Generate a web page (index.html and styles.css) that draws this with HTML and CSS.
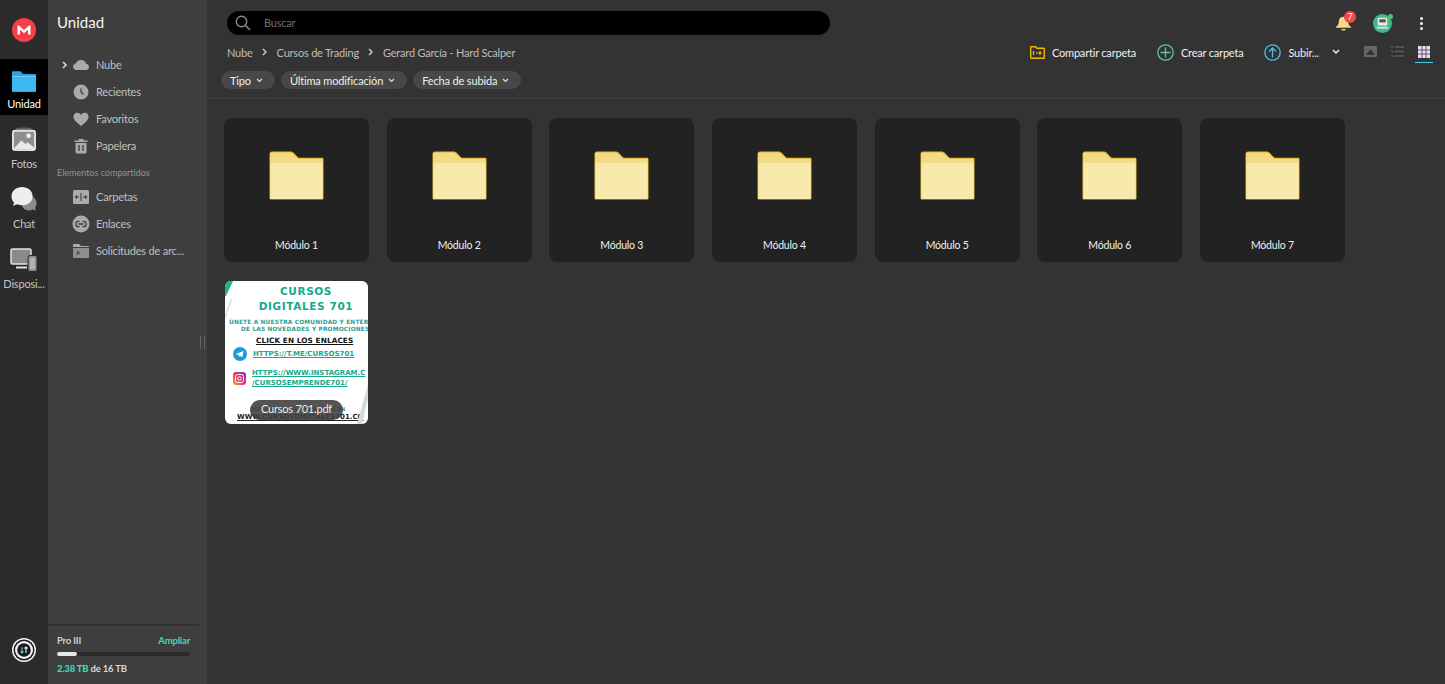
FILE: index.html
```html
<!DOCTYPE html>
<html lang="es">
<head>
    <meta charset="UTF-8">
    <meta name="viewport" content="width=device-width, initial-scale=1.0">
    <title>MEGA</title>
    <link rel="stylesheet" href="styles.css">
</head>
<body>
    <svg class="defs" width="0" height="0">
        <symbol id="folder" viewBox="0 0 54 48">
            <path d="M3 .5h18c1.500 0 2.500.5 3.500 1.500l3 3c1 1 1.500 1.500 3 1.500H52c1 0 1.500.5 1.500 1.500v38c0 1-.5 1.500-1.500 1.500H2c-1 0-1.500-.5-1.500-1.500V3C.5 1.500 1.500.5 3 .5z" fill="#e2b92c"/>
            <path d="M3 1.500h18c1 0 2 .5 3 1.500l3 3c1 1 2 1.500 3.500 1.500H52c.5 0 .8.300.8.800V11H1.200V3c0-1 .8-1.500 1.800-1.500z" fill="#f3da85"/>
            <path d="M1.200 11h51.600v35.200c0 .5-.3.800-.8.800H2c-.5 0-.8-.3-.8-.8z" fill="#f8e9ad"/>
        </symbol>
    </svg>

    <div class="app">
        <!-- Barra de iconos -->
        <nav class="rail">
            <div class="rail-logo">
                <svg width="24" height="24" viewBox="0 0 24 24">
                    <circle cx="12" cy="12" r="12" fill="#f4404a"/>
                    <path d="M5.500 16.500V7.500h1.500L12 12l5-4.500h1.500v9h-2.500v-4.800L12 15.200l-4-3.500v4.800z" fill="#fff"/>
                </svg>
            </div>
            <a class="rail-item active">
                <svg width="24" height="21" viewBox="0 0 26 22">
                    <path d="M1 0h8l3 3h13c.6 0 1 .4 1 1v17c0 .6-.4 1-1 1H1c-.6 0-1-.4-1-1V1c0-.6.4-1 1-1z" fill="#2aa5e8"/>
                    <path d="M0 5.500h26V21c0 .6-.4 1-1 1H1c-.6 0-1-.4-1-1z" fill="#3cb7f2"/>
                    <path d="M0 5h26v.7H0z" fill="#9ddcf8"/>
                </svg>
                <span>Unidad</span>
            </a>
            <a class="rail-item">
                <svg width="24" height="25" viewBox="0 0 26 26">
                    <path d="M4 2.500C4.500 1 6 0 8 0h10c2 0 3.500 1 4 2.500z" fill="#5f5f5f"/>
                    <rect x="1" y="3.500" width="24" height="21" rx="2.500" fill="#8f8f8f" stroke="#e4e4e4" stroke-width="2"/>
                    <circle cx="18" cy="9" r="2.500" fill="#f2f2f2"/>
                    <path d="M2 23l8-9 4.500 4 2.500-2 7 6v1.500H2z" fill="#e9e9e9"/>
                </svg>
                <span>Fotos</span>
            </a>
            <a class="rail-item">
                <svg width="26" height="25" viewBox="0 0 26 26">
                    <path d="M14 10c5-2 12 0 12 7 0 2-.5 3.500-1.500 4.500l1 3-3.500-1c-4 2-10 .5-11-4z" fill="#8c8c8c"/>
                    <path d="M11 0c6 0 11 4 11 9.500S17 19 11 19c-1.800 0-3.400-.3-4.800-1l-4.700 1.500 1.200-3.700C1 15 0 12.500 0 9.500 0 4 5 0 11 0z" fill="#eeeeee"/>
                </svg>
                <span>Chat</span>
            </a>
            <a class="rail-item">
                <svg width="28" height="24" viewBox="0 0 28 24">
                    <rect x="1" y="1" width="20" height="15" rx="1.500" fill="#8a8a8a" stroke="#e2e2e2" stroke-width="1.500"/>
                    <path d="M6 19.500h11" stroke="#e2e2e2" stroke-width="2"/>
                    <rect x="18" y="7.500" width="9" height="16" rx="2" fill="#8f8f8f" stroke="#2c2c2c" stroke-width="1"/>
                    <rect x="20" y="10" width="5" height="11" fill="#b3b3b3"/>
                </svg>
                <span>Disposi...</span>
            </a>
            <div class="rail-bottom">
                <svg width="24" height="24" viewBox="0 0 24 24">
                    <circle cx="12" cy="12" r="12" fill="#f5f5f5"/>
                    <circle cx="12" cy="12" r="10.500" fill="#1c1c1c"/>
                    <circle cx="12" cy="12" r="9" fill="#f5f5f5"/>
                    <circle cx="12" cy="12" r="6.800" fill="#1c1c1c"/>
                    <path d="M10 9v6M8.600 13.500l1.400 1.500 1.400-1.500" stroke="#5ec8f0" stroke-width="1.100" fill="none"/>
                    <path d="M14 15V9M12.600 10.500L14 9l1.400 1.500" stroke="#f2f2f2" stroke-width="1.100" fill="none"/>
                </svg>
            </div>
        </nav>

        <!-- Panel lateral -->
        <aside class="sidebar">
            <h1 class="sidebar-title">Unidad</h1>
            <ul class="tree">
                <li class="tree-row">
                    <svg class="tree-arrow" width="6" height="8" viewBox="0 0 6 8"><path d="M1 1l3 3-3 3" fill="none" stroke="#d8d8d8" stroke-width="1.600"/></svg>
                    <svg class="tree-icon" width="16" height="16" viewBox="0 0 16 16"><path d="M3.800 13C1.700 13 0 11.600 0 9.700c0-1.700 1.300-3 3-3.200C3.600 4.400 5.600 3 8 3c2.600 0 4.600 1.600 5 3.800 1.800.2 3 1.500 3 3.100 0 1.800-1.400 3.100-3.300 3.100z" fill="#aaa"/></svg>
                    <span>Nube</span>
                </li>
                <li class="tree-row">
                    <svg class="tree-icon" width="16" height="16" viewBox="0 0 16 16"><circle cx="8" cy="8" r="7.500" fill="#aaa"/><path d="M8 4.500V8l2.500 2.500" fill="none" stroke="#3e3e3e" stroke-width="1.300"/></svg>
                    <span>Recientes</span>
                </li>
                <li class="tree-row">
                    <svg class="tree-icon" width="16" height="16" viewBox="0 0 16 16"><path d="M8 15C3.500 11.500 1 9 .5 6.500.2 3.800 2 1.800 4.300 1.800 5.800 1.800 7.200 2.600 8 4c.8-1.400 2.200-2.200 3.700-2.200 2.300 0 4.100 2 3.800 4.700C15 9 12.500 11.500 8 15z" fill="#aaa"/></svg>
                    <span>Favoritos</span>
                </li>
                <li class="tree-row">
                    <svg class="tree-icon" width="14" height="16" viewBox="1 0 14 16"><path d="M1.500 2.500h4V1h5v1.500h4V4h-13zM2.500 5h11v9c0 .8-.6 1.500-1.500 1.500H4c-.9 0-1.500-.7-1.500-1.500z" fill="#aaa"/><path d="M6 7v6M10 7v6" stroke="#3e3e3e" stroke-width="1.300"/></svg>
                    <span>Papelera</span>
                </li>
            </ul>
            <p class="tree-header">Elementos compartidos</p>
            <ul class="tree">
                <li class="tree-row">
                    <svg class="tree-icon" width="16" height="14" viewBox="0 0 16 14"><rect width="16" height="14" rx="1.500" fill="#aaa"/><path d="M8 3v8M2.500 7h3.500M4 5.500L2.500 7 4 8.500M13.500 7H10M12 5.500L13.500 7 12 8.500" fill="none" stroke="#3e3e3e" stroke-width="1.100"/></svg>
                    <span>Carpetas</span>
                </li>
                <li class="tree-row">
                    <svg class="tree-icon" width="18" height="18" viewBox="0 0 18 18"><circle cx="9" cy="9" r="8.500" fill="#aaa"/><path d="M7.500 6.300H6.500a2.700 2.700 0 000 5.400h1M10.500 6.300h1a2.700 2.700 0 010 5.400h-1M6.500 9h5" fill="none" stroke="#3e3e3e" stroke-width="1.300"/></svg>
                    <span>Enlaces</span>
                </li>
                <li class="tree-row">
                    <svg class="tree-icon" width="16" height="14" viewBox="0 0 16 14"><path d="M0 1c0-.6.4-1 1-1h5l2 2h7c.6 0 1 .4 1 1H0z" fill="#aaa"/><path d="M0 4h16v9c0 .6-.4 1-1 1H1c-.6 0-1-.4-1-1z" fill="#8e8e8e"/><path d="M3 11l3-3M3.500 8H6v2.500" fill="none" stroke="#3e3e3e" stroke-width="1"/></svg>
                    <span>Solicitudes de arc...</span>
                </li>
            </ul>
            <div class="resize-handle"></div>
            <div class="storage">
                <div class="storage-top">
                    <span class="plan">Pro III</span>
                    <a class="upgrade">Ampliar</a>
                </div>
                <div class="storage-bar"><div class="storage-fill" style="width:14.900%"></div></div>
                <div class="storage-text"><b>2.38 TB</b> de 16 TB</div>
            </div>
        </aside>

        <!-- Contenido -->
        <main class="main">
            <header class="topbar">
                <div class="search">
                    <svg width="16" height="16" viewBox="0 0 16 16"><circle cx="6.500" cy="6.500" r="5.200" fill="none" stroke="#8a8a8a" stroke-width="1.400"/><path d="M10.500 10.500l4.500 4.500" stroke="#8a8a8a" stroke-width="1.600"/></svg>
                    <span>Buscar</span>
                </div>
                <div class="top-icons">
                    <div class="bell">
                        <svg width="15" height="15" viewBox="0 0 16 18" preserveAspectRatio="none"><path d="M8 1c3 0 5 2.300 5 5.500 0 3.500 1 5 3 6.500v1H0v-1c2-1.500 3-3 3-6.500C3 3.300 5 1 8 1z" fill="#f6d98a"/><path d="M5.500 15.500h5c0 1.200-1.100 2-2.500 2s-2.500-.8-2.500-2z" fill="#f3cf73"/></svg>
                        <span class="badge">7</span>
                    </div>
                    <div class="avatar">
                        <svg width="19" height="19" viewBox="0 0 18 18"><circle cx="9" cy="9" r="9" fill="#3fb98c"/><rect x="4.500" y="3.500" width="9" height="7.500" rx="1" fill="#e9e9e9"/><rect x="6" y="5" width="6" height="3" fill="#555"/><path d="M3.500 12h11v2h-11z" fill="#d6d6d6"/></svg>
                        <span class="online"></span>
                    </div>
                    <div class="kebab"><i></i><i></i><i></i></div>
                </div>
            </header>

            <div class="pathbar">
                <div class="breadcrumb">
                    <span>Nube</span>
                    <svg width="6" height="8" viewBox="0 0 6 8"><path d="M1 1l3 3-3 3" fill="none" stroke="#d0d0d0" stroke-width="1.400"/></svg>
                    <span>Cursos de Trading</span>
                    <svg width="6" height="8" viewBox="0 0 6 8"><path d="M1 1l3 3-3 3" fill="none" stroke="#d0d0d0" stroke-width="1.400"/></svg>
                    <span>Gerard García - Hard Scalper</span>
                </div>
                <div class="actions">
                    <a class="action share">
                        <svg width="15" height="13" viewBox="0 0 15 13"><path d="M1 .7h4.500l1.500 1.500h6.500c.5 0 .8.300.8.800v8.500c0 .5-.3.800-.8.800H1.500c-.5 0-.8-.3-.8-.8V1z" fill="none" stroke="#f5b800" stroke-width="1.400"/><path d="M3.500 5v4M6 7h5M9.500 5.500L11 7 9.500 8.500" fill="none" stroke="#f5b800" stroke-width="1.200"/></svg>
                        <span>Compartir carpeta</span>
                    </a>
                    <a class="action create">
                        <svg width="17" height="17" viewBox="0 0 17 17"><circle cx="8.500" cy="8.500" r="7.700" fill="none" stroke="#5fc4a4" stroke-width="1.300"/><path d="M8.500 3.500v10M3.500 8.500h10" stroke="#5fc4a4" stroke-width="1.300"/></svg>
                        <span>Crear carpeta</span>
                    </a>
                    <a class="action upload">
                        <svg width="17" height="17" viewBox="0 0 17 17"><circle cx="8.500" cy="8.500" r="7.700" fill="none" stroke="#4db8ef" stroke-width="1.300"/><path d="M8.500 13.500v-9M5 7.500l3.500-3.500L12 7.500" fill="none" stroke="#4db8ef" stroke-width="1.300"/></svg>
                        <span>Subir...</span>
                        <svg class="upload-caret" width="8" height="6" viewBox="0 0 8 6"><path d="M1 1l3 3 3-3" fill="none" stroke="#eee" stroke-width="1.500"/></svg>
                    </a>
                    <div class="views">
                        <a class="view">
                            <svg width="13" height="11" viewBox="0 0 13 11"><rect width="13" height="11" rx="1" fill="#666"/><path d="M2 9l4.500-6L11 9z" fill="#333"/></svg>
                        </a>
                        <a class="view">
                            <svg width="13" height="11" viewBox="0 0 13 11"><path d="M0 1h2.500M4 1h9M0 5.500h2.500M4 5.500h9M0 10h2.500M4 10h9" stroke="#5c5c5c" stroke-width="1.500"/></svg>
                        </a>
                        <a class="view selected">
                            <svg width="12" height="12" viewBox="0 0 12 12"><rect width="12" height="12" fill="#e6e0ea"/><path d="M4 0v12M8 0v12M0 4h12M0 8h12" stroke="#6a4a78" stroke-width="1"/></svg>
                        </a>
                    </div>
                </div>
            </div>

            <div class="filters">
                <button class="chip">Tipo <svg width="7" height="5" viewBox="0 0 7 5"><path d="M1 1l2.500 2.500L6 1" fill="none" stroke="#ddd" stroke-width="1.200"/></svg></button>
                <button class="chip">Última modificación <svg width="7" height="5" viewBox="0 0 7 5"><path d="M1 1l2.500 2.500L6 1" fill="none" stroke="#ddd" stroke-width="1.200"/></svg></button>
                <button class="chip">Fecha de subida <svg width="7" height="5" viewBox="0 0 7 5"><path d="M1 1l2.500 2.500L6 1" fill="none" stroke="#ddd" stroke-width="1.200"/></svg></button>
            </div>

            <section class="grid">
                <div class="card"><svg class="folder" width="55" height="49"><use href="#folder"/></svg><span>Módulo 1</span></div>
                <div class="card"><svg class="folder" width="55" height="49"><use href="#folder"/></svg><span>Módulo 2</span></div>
                <div class="card"><svg class="folder" width="55" height="49"><use href="#folder"/></svg><span>Módulo 3</span></div>
                <div class="card"><svg class="folder" width="55" height="49"><use href="#folder"/></svg><span>Módulo 4</span></div>
                <div class="card"><svg class="folder" width="55" height="49"><use href="#folder"/></svg><span>Módulo 5</span></div>
                <div class="card"><svg class="folder" width="55" height="49"><use href="#folder"/></svg><span>Módulo 6</span></div>
                <div class="card"><svg class="folder" width="55" height="49"><use href="#folder"/></svg><span>Módulo 7</span></div>

                <div class="card-pdf">
                    <svg class="pdf-deco" width="143" height="143" viewBox="0 0 143 143">
                        <path d="M0 0h8L1 15H0z" fill="#17b890"/>
                        <path d="M0 34L6 18l1 1-7 19z" fill="#d4dcda"/>
                        <path d="M143 103l-11 40h5l6-25z" fill="#d4dcda"/>
                    </svg>
                    <div class="pdf-title">CURSOS</div>
                    <div class="pdf-title">DIGITALES 701</div>
                    <div class="pdf-sub first">ÚNETE A NUESTRA COMUNIDAD Y ENTÉR</div>
                    <div class="pdf-sub second">DE LAS NOVEDADES Y PROMOCIONES</div>
                    <div class="pdf-click">CLICK EN LOS ENLACES</div>
                    <div class="pdf-link">
                        <svg width="14" height="14" viewBox="0 0 14 14"><circle cx="7" cy="7" r="7" fill="#1d9bd7"/><path d="M2.800 7L10.500 4 9.300 10.300 7 8.700 5.800 9.800 5.600 8z" fill="#fff"/></svg>
                        <span>HTTPS://T.ME/CURSOS701</span>
                    </div>
                    <div class="pdf-link insta">
                        <svg width="13" height="13" viewBox="0 0 13 13"><defs><linearGradient id="ig" x1="0" y1="1" x2="1" y2="0"><stop offset="0" stop-color="#f9a825"/><stop offset=".5" stop-color="#e1306c"/><stop offset="1" stop-color="#6a3fc8"/></linearGradient></defs><rect width="13" height="13" rx="3" fill="url(#ig)"/><rect x="2.500" y="2.500" width="8" height="8" rx="2" fill="none" stroke="#fff"/><circle cx="6.500" cy="6.500" r="1.800" fill="none" stroke="#fff"/></svg>
                        <span>HTTPS://WWW.INSTAGRAM.C<br>/CURSOSEMPRENDE701/</span>
                    </div>
                    <div class="pdf-more">REDES SOCIALES Y BÚSCANOS EN</div>
                    <div class="pdf-web">WWW.CURSOSDIGITALES701.CO</div>
                    <span class="pdf-name">Cursos 701.pdf</span>
                </div>
            </section>
        </main>
    </div>
</body>
</html>
```

FILE: styles.css
```css
/* Estilos básicos */
* {
    box-sizing: border-box;
}

html, body {
    margin: 0;
    padding: 0;
    height: 100%;
    overflow: hidden;
    background-color: #333;
    color: #eee;
    font-family: Lato, "Liberation Sans", sans-serif;
    letter-spacing: -0.2px;
}

.defs {
    position: absolute;
}

svg {
    display: block;
    flex: none;
}

ul {
    list-style: none;
    margin: 0;
    padding: 0;
}

.app {
    display: flex;
    height: 684px;
}

/* Barra de iconos */
.rail {
    width: 48px;
    flex: none;
    display: flex;
    flex-direction: column;
    background-color: #2b2b2b;
}

.rail-logo {
    height: 59px;
    padding-top: 18px;
    display: flex;
    justify-content: center;
}

.rail-item {
    display: flex;
    flex-direction: column;
    align-items: center;
    justify-content: flex-end;
    gap: 4px;
    height: 60px;
    padding-bottom: 4px;
    font-size: 11px;
    line-height: 15px;
    color: #c4c4c4;
    white-space: nowrap;
}

.rail-item.active {
    height: 56px;
    background-color: #000;
    color: #fff;
}

.rail-bottom {
    margin-top: auto;
    padding-bottom: 22px;
    display: flex;
    justify-content: center;
}

/* Panel lateral */
.sidebar {
    position: relative;
    width: 159px;
    flex: none;
    display: flex;
    flex-direction: column;
    background-color: #3e3e3e;
}

.sidebar-title {
    margin: 0;
    padding: 12px 0 0 9px;
    height: 51px;
    font-size: 15px;
    line-height: 20px;
    font-weight: 400;
    letter-spacing: 0;
    color: #f5f5f5;
}

.tree-row {
    position: relative;
    display: flex;
    align-items: center;
    height: 27px;
    padding-left: 48px;
    font-size: 11px;
    color: #c0c0c0;
    white-space: nowrap;
}

.tree-icon {
    position: absolute;
    left: 33px;
    top: 50%;
    transform: translate(-50%, -50%);
}

.tree-arrow {
    position: absolute;
    left: 14px;
    top: 10px;
}

.tree-header {
    margin: 0;
    padding-left: 9px;
    height: 24px;
    font-size: 9px;
    letter-spacing: 0;
    line-height: 28px;
    color: #939393;
}

.resize-handle {
    position: absolute;
    right: 2px;
    top: 336px;
    width: 5px;
    height: 13px;
    border-left: 1px solid #666;
    border-right: 1px solid #666;
}

.storage {
    margin-top: auto;
    width: 151px;
    height: 60px;
    padding: 8px 9px 0;
    border-top: 2px solid #303030;
    font-size: 9.500px;
    font-weight: 700;
    letter-spacing: -0.2px;
}

.storage-top {
    display: flex;
    justify-content: space-between;
    line-height: 13px;
}

.plan {
    color: #d0d0d0;
}

.upgrade {
    color: #45d6b5;
}

.storage-bar {
    height: 4px;
    margin-top: 5px;
    border-radius: 2px;
    background-color: #2b2b2b;
}

.storage-fill {
    height: 4px;
    border-radius: 2px;
    background-color: #e6e6e6;
}

.storage-text {
    margin-top: 6px;
    line-height: 13px;
    color: #d8d8d8;
}

.storage-text b {
    color: #45d6b5;
}

/* Contenido */
.main {
    flex: 1;
    min-width: 0;
    display: flex;
    flex-direction: column;
}

.topbar {
    display: flex;
    align-items: flex-start;
    justify-content: space-between;
    height: 45px;
    padding: 11px 22px 0 20px;
}

.search {
    width: 603px;
    height: 24px;
    display: flex;
    align-items: center;
    gap: 13px;
    padding: 0 0 1px 8px;
    border-radius: 12px;
    background-color: #000;
    font-size: 11px;
    color: #6f6f6f;
}

.top-icons {
    display: flex;
    align-items: center;
    height: 24px;
}

.bell {
    position: relative;
}

.badge {
    position: absolute;
    top: -5px;
    right: -5px;
    width: 12px;
    height: 12px;
    border-radius: 50%;
    background-color: #f0474a;
    color: #fff;
    font-size: 9px;
    line-height: 12px;
    text-align: center;
}

.avatar {
    position: relative;
    margin-left: 22px;
}

.online {
    position: absolute;
    top: 0;
    right: -1px;
    width: 5px;
    height: 5px;
    border-radius: 50%;
    background-color: #4cc96f;
}

.kebab {
    margin-left: 28px;
    width: 3px;
    display: flex;
    flex-direction: column;
    gap: 2px;
}

.kebab i {
    display: block;
    width: 3px;
    height: 3px;
    border-radius: 50%;
    background-color: #f2f2f2;
}

.pathbar {
    display: flex;
    align-items: center;
    justify-content: space-between;
    height: 14px;
    padding: 0 12px 0 20px;
}

.breadcrumb {
    display: flex;
    align-items: center;
    gap: 9px;
    font-size: 11px;
    color: #bdbdbd;
    white-space: nowrap;
}

.actions {
    display: flex;
    align-items: center;
    font-size: 11px;
    color: #f0f0f0;
}

.action {
    display: flex;
    align-items: center;
    gap: 7px;
    margin-right: 21px;
    white-space: nowrap;
}

.upload-caret {
    margin-left: 6px;
}

.views {
    display: flex;
    gap: 9px;
}

.view {
    display: flex;
    justify-content: center;
    width: 18px;
}

.view.selected {
    position: relative;
}

.view.selected::after {
    content: "";
    position: absolute;
    left: 0;
    right: 0;
    bottom: -5px;
    height: 1px;
    background-color: #4bd0ea;
}

.filters {
    display: flex;
    gap: 6px;
    height: 40px;
    padding: 12px 0 0 14px;
    border-bottom: 1px solid #3e3e3e;
}

.chip {
    height: 18px;
    padding: 0 12px 0 9px;
    display: flex;
    align-items: center;
    gap: 5px;
    border: none;
    border-radius: 9px;
    background-color: #474747;
    color: #f0f0f0;
    font-family: inherit;
    font-size: 11px;
    letter-spacing: -0.15px;
}

.grid {
    display: grid;
    grid-template-columns: repeat(auto-fill, 145px);
    grid-auto-rows: 144px;
    gap: 19px 17.670px;
    padding: 19px 0 0 17px;
}

.card {
    display: flex;
    flex-direction: column;
    align-items: center;
    padding-top: 33px;
    border-radius: 8px;
    background-color: #222;
    font-size: 10.500px;
    color: #f0f0f0;
}

.card span {
    margin-top: 39px;
}

/* Miniatura del PDF */
.card-pdf {
    position: relative;
    overflow: hidden;
    width: 143px;
    height: 143px;
    margin-left: 1px;
    padding-top: 3px;
    border-radius: 6px;
    background-color: #fff;
    font-family: "DejaVu Sans", sans-serif;
    font-weight: 700;
    white-space: nowrap;
    color: #15a98c;
}

.pdf-deco {
    position: absolute;
    left: 0;
    top: 0;
}

.pdf-title {
    width: 162px;
    text-align: center;
    font-size: 10.500px;
    line-height: 15px;
    letter-spacing: .6px;
}

.pdf-sub {
    font-size: 5.800px;
    line-height: 7px;
    letter-spacing: .2px;
    color: #2a9d92;
}

.pdf-sub.first {
    margin: 5px 0 0 4px;
}

.pdf-sub.second {
    margin-left: 16px;
}

.pdf-click {
    margin: 3px 0 0 31px;
    font-size: 7.300px;
    line-height: 10px;
    letter-spacing: .1px;
    color: #111;
    text-decoration: underline;
}

.pdf-link {
    display: flex;
    align-items: center;
    gap: 6px;
    margin: 1px 0 0 8px;
    font-size: 7px;
    line-height: 10px;
    letter-spacing: 0;
    text-decoration: underline;
    color: #19a88a;
}

.pdf-link.insta {
    margin-top: 7px;
}

.pdf-more {
    margin: 17px 0 0 25px;
    font-size: 5px;
    line-height: 8px;
    letter-spacing: 0;
    color: #19a88a;
}

.pdf-web {
    margin-left: 12px;
    font-size: 7px;
    line-height: 9px;
    letter-spacing: 0;
    color: #222;
    text-decoration: underline;
}

.pdf-name {
    position: absolute;
    left: 25px;
    bottom: 4px;
    width: 93px;
    height: 20px;
    border-radius: 10px;
    background-color: rgba(60, 60, 60, .88);
    color: #eee;
    font-family: Lato, sans-serif;
    font-size: 11px;
    font-weight: 400;
    letter-spacing: -0.2px;
    line-height: 18px;
    text-align: center;
}
```
